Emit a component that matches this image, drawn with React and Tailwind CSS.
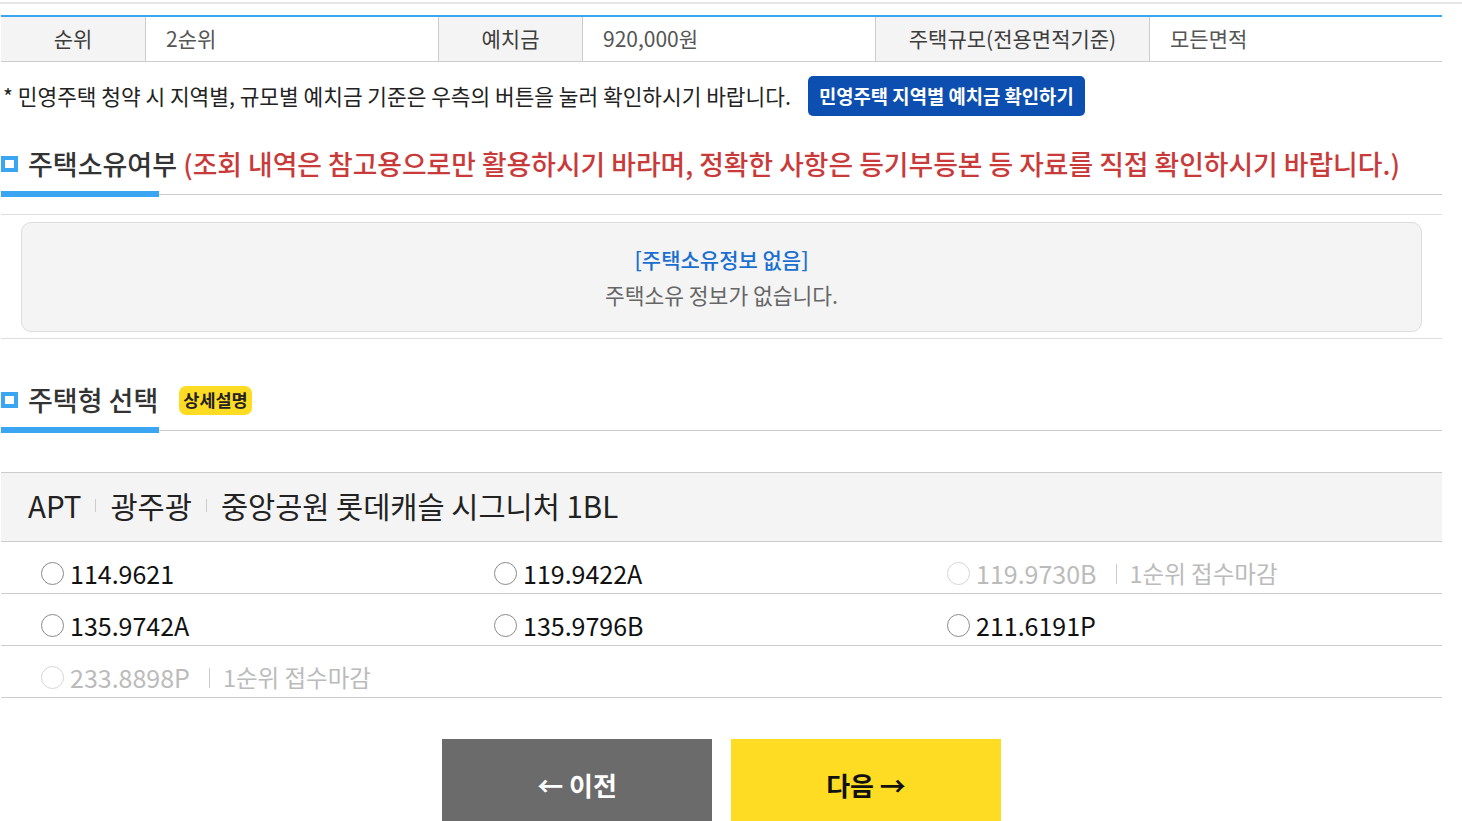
const FONT = { fontFamily: '"Noto Sans CJK KR", "Noto Sans", sans-serif' };

const infoCells = [
  { label: "순위", value: "2순위", lw: "w-[145px]", vw: "w-[293px]" },
  { label: "예치금", value: "920,000원", lw: "w-[144px]", vw: "w-[293px]" },
  { label: "주택규모(전용면적기준)", value: "모든면적", lw: "w-[274px]", vw: "w-[292px]" },
];

const houseTypes = [
  [
    { size: "114.9621" },
    { size: "119.9422A" },
    { size: "119.9730B", closed: true },
  ],
  [{ size: "135.9742A" }, { size: "135.9796B" }, { size: "211.6191P" }],
  [{ size: "233.8898P", closed: true }],
];

function SectionTitle({ children, extra }) {
  return (
    <div className="relative flex items-center h-[36px] pb-[12px] box-content border-b border-[#cccccc]">
      <span className="w-[17px] h-[16px] border-[4px] border-[#3aa5f1] bg-white shrink-0" />
      <h3 className="ml-[10px] text-[27px] leading-[36px] font-medium text-[#333333] whitespace-nowrap">
        {children}
      </h3>
      {extra}
      <span className="absolute left-0 bottom-[-3px] w-[158px] h-[6px] bg-[#3aa5f1]" />
    </div>
  );
}

function Radio({ size, closed }) {
  return (
    <label className="flex items-center h-full">
      <span
        className={
          "w-[23px] h-[23px] rounded-full border bg-white ml-[1px] shrink-0 " +
          (closed ? "border-[#d6d6d6]" : "border-[#8a8a8a]")
        }
      />
      <span
        className={
          "ml-[6px] text-[25px] leading-none " +
          (closed ? "text-[#bbbbbb]" : "text-[#111111]")
        }
      >
        {size}
      </span>
      {closed && (
        <>
          <span className="ml-[19px] w-px h-[20px] bg-[#cccccc]" />
          <span className="ml-[13px] text-[23.5px] leading-none text-[#bbbbbb]">
            1순위 접수마감
          </span>
        </>
      )}
    </label>
  );
}

export default function App() {
  return (
    <div className="min-h-screen bg-white" style={FONT}>
      <div className="h-[2px]" />
      <div className="h-[2px] bg-[#e6e6e6]" />
      <div className="ml-[1px] w-[1441px] pt-[11px]">
        {/* 청약 정보 */}
        <div className="flex border-t-2 border-[#3aa5f1] border-b border-b-[#cccccc] h-[47px]">
          {infoCells.map((c, i) => (
            <div key={c.label} className="flex">
              <div
                className={
                  c.lw +
                  " flex items-center justify-center bg-[#f4f4f4] text-[21px] text-[#3d3d3d] border-r border-[#cccccc]"
                }
              >
                {c.label}
              </div>
              <div
                className={
                  c.vw +
                  " flex items-center pl-[20px] text-[21px] text-[#555555] " +
                  (i < infoCells.length - 1 ? "border-r border-[#cccccc]" : "")
                }
              >
                {c.value}
              </div>
            </div>
          ))}
        </div>

        <div className="flex items-center pt-[14px]">
          <p className="pl-[2px] text-[21.4px] text-[#222222] whitespace-nowrap">
            * 민영주택 청약 시 지역별, 규모별 예치금 기준은 우측의 버튼을 눌러 확인하시기 바랍니다.
          </p>
          <button className="ml-[17px] w-[277px] h-[40px] flex items-center justify-center rounded-[5px] bg-[#0d4fb0] text-white text-[18.8px] font-bold">
            민영주택 지역별 예치금 확인하기
          </button>
        </div>

        {/* 주택소유여부 */}
        <div className="mt-[30px]">
          <SectionTitle>
            주택소유여부{" "}
            <span className="text-[#c93a3a] text-[26.8px]">
              (조회 내역은 참고용으로만 활용하시기 바라며, 정확한 사항은 등기부등본 등 자료를 직접 확인하시기 바랍니다.)
            </span>
          </SectionTitle>
        </div>

        <div className="mt-[19px] border-t border-b border-[#dddddd] pt-[7px] pb-[6px]">
          <div className="mx-[20px] h-[110px] rounded-[10px] border border-[#dddddd] bg-[#f4f4f4] flex flex-col items-center justify-center">
            <p className="text-[21px] leading-[30px] font-medium text-[#1a6fd0]">
              [주택소유정보 없음]
            </p>
            <p className="mt-[6px] text-[21.5px] leading-[30px] text-[#666666]">
              주택소유 정보가 없습니다.
            </p>
          </div>
        </div>

        {/* 주택형 선택 */}
        <div className="mt-[43px]">
          <SectionTitle
            extra={
              <span className="ml-[21px] h-[29px] px-[4px] flex items-center rounded-[7px] bg-[#ffdc24] text-[17.5px] font-bold text-[#222222]">
                상세설명
              </span>
            }
          >
            주택형 선택
          </SectionTitle>
        </div>

        <div className="mt-[41px] border-t border-[#cccccc]">
          <div className="h-[69px] pb-[3px] bg-[#f4f4f4] border-b border-[#cccccc] flex items-center pl-[27px] text-[29.5px] text-[#222222]">
            <span>APT</span>
            <span className="mx-[14px] w-px h-[13px] bg-[#cccccc]" />
            <span>광주광</span>
            <span className="mx-[14px] w-px h-[13px] bg-[#cccccc]" />
            <span>중앙공원 롯데캐슬 시그니처 1BL</span>
          </div>
          {houseTypes.map((row, r) => (
            <div
              key={r}
              className="h-[52px] pt-[12px] border-b border-[#cccccc] pl-[39px] grid grid-cols-[453px_453px_453px]"
            >
              {row.map((t) => (
                <Radio key={t.size} {...t} />
              ))}
            </div>
          ))}
        </div>

        <div className="mt-[41px] flex justify-center gap-[19px]">
          <button className="w-[270px] h-[90px] bg-[#6b6b6b] text-white text-[26px] font-bold flex items-center justify-center">
            ← 이전
          </button>
          <button className="w-[270px] h-[90px] bg-[#ffdc24] text-[#111111] text-[26px] font-bold flex items-center justify-center">
            다음 →
          </button>
        </div>
        <div className="h-[40px]" />
      </div>
    </div>
  );
}
